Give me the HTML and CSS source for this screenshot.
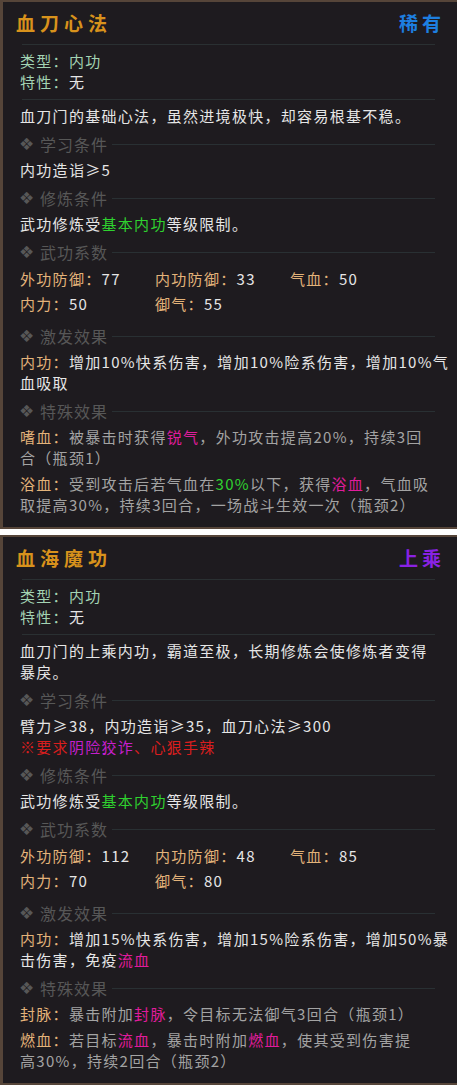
FILE: index.html
```html
<!DOCTYPE html>
<html lang="zh-CN">
<head>
<meta charset="utf-8">
<title>武功</title>
<link rel="stylesheet" href="styles.css">
</head>
<body>
<div class="panel">
  <div class="head"><span class="name">血刀心法</span><span class="rarity rare">稀有</span></div>
  <div class="rule"></div>
  <div class="info">
    <div><span class="k">类型：内功</span></div>
    <div><span class="k">特性：</span><span class="w">无</span></div>
  </div>
  <div class="rule r2"></div>
  <p class="desc">血刀门的基础心法，虽然进境极快，却容易根基不稳。</p>

  <div class="sec"><span class="dia">❖</span><span class="st">学习条件</span><span class="ln"></span></div>
  <p class="txt">内功造诣≥5</p>

  <div class="sec"><span class="dia">❖</span><span class="st">修炼条件</span><span class="ln"></span></div>
  <p class="txt">武功修炼受<span class="g">基本内功</span>等级限制。</p>

  <div class="sec"><span class="dia">❖</span><span class="st">武功系数</span><span class="ln"></span></div>
  <div class="stats">
    <span><b>外功防御：</b>77</span><span><b>内功防御：</b>33</span><span><b>气血：</b>50</span>
    <span><b>内力：</b>50</span><span><b>御气：</b>55</span>
  </div>

  <div class="sec sec-far"><span class="dia">❖</span><span class="st">激发效果</span><span class="ln"></span></div>
  <p class="txt"><b class="lb">内功：</b>增加10%快系伤害，增加10%险系伤害，增加10%气<br>血吸取</p>

  <div class="sec"><span class="dia">❖</span><span class="st">特殊效果</span><span class="ln"></span></div>
  <p class="eff"><b class="lb">嗜血：</b>被暴击时获得<span class="m">锐气</span>，外功攻击提高20%，持续3回<br>合（瓶颈1）</p>
  <p class="eff"><b class="lb">浴血：</b>受到攻击后若气血在<span class="g">30%</span>以下，获得<span class="m">浴血</span>，气血吸<br>取提高30%，持续3回合，一场战斗生效一次（瓶颈2）</p>
</div>

<div class="panel">
  <div class="head"><span class="name">血海魔功</span><span class="rarity epic">上乘</span></div>
  <div class="rule"></div>
  <div class="info">
    <div><span class="k">类型：内功</span></div>
    <div><span class="k">特性：</span><span class="w">无</span></div>
  </div>
  <div class="rule r2"></div>
  <p class="desc">血刀门的上乘内功，霸道至极，长期修炼会使修炼者变得<br>暴戾。</p>

  <div class="sec"><span class="dia">❖</span><span class="st">学习条件</span><span class="ln"></span></div>
  <p class="txt">臂力≥38，内功造诣≥35，血刀心法≥300<br><span class="red">※要求<span class="pu">阴险狡诈</span>、心狠手辣</span></p>

  <div class="sec"><span class="dia">❖</span><span class="st">修炼条件</span><span class="ln"></span></div>
  <p class="txt">武功修炼受<span class="g">基本内功</span>等级限制。</p>

  <div class="sec"><span class="dia">❖</span><span class="st">武功系数</span><span class="ln"></span></div>
  <div class="stats">
    <span><b>外功防御：</b>112</span><span><b>内功防御：</b>48</span><span><b>气血：</b>85</span>
    <span><b>内力：</b>70</span><span><b>御气：</b>80</span>
  </div>

  <div class="sec sec-far"><span class="dia">❖</span><span class="st">激发效果</span><span class="ln"></span></div>
  <p class="txt"><b class="lb">内功：</b>增加15%快系伤害，增加15%险系伤害，增加50%暴<br>击伤害，免疫<span class="m">流血</span></p>

  <div class="sec"><span class="dia">❖</span><span class="st">特殊效果</span><span class="ln"></span></div>
  <p class="eff"><b class="lb">封脉：</b>暴击附加<span class="m">封脉</span>，令目标无法御气3回合（瓶颈1）</p>
  <p class="eff"><b class="lb">燃血：</b>若目标<span class="m">流血</span>，暴击时附加<span class="m">燃血</span>，使其受到伤害提<br>高30%，持续2回合（瓶颈2）</p>
</div>
</body>
</html>
```

FILE: styles.css
```css
html, body {
  margin: 0;
  padding: 0;
  background: #ffffff;
}

body {
  width: 457px;
  height: 1085px;
  overflow: hidden;
  font-family: "Noto Sans CJK SC", "Noto Sans", sans-serif;
  font-size: 15px;
  letter-spacing: 1.3px;
  line-height: 21px;
  color: #e6e6e6;
  display: flex;
  flex-direction: column;
  gap: 6px;
}

.panel {
  background: #1e1b1f;
  border-left: 3px solid #564539;
  border-top: 2px solid #564539;
  border-bottom: 2px solid #564539;
  padding: 0 6px 12px 17px;
  flex: none;
}

.head {
  height: 42px;
  display: flex;
  align-items: center;
  justify-content: space-between;
  margin: 0 10px 0 -4px;
}

.name,
.rarity {
  font-size: 19px;
  font-weight: 700;
  letter-spacing: 5px;
  line-height: 42px;
}

.name { color: #d8921c; }
.rarity { letter-spacing: 4px; margin-right: -4px; }
.rare { color: #1d7fe0; }
.epic { color: #8a22e4; }

.rule {
  height: 1px;
  background: #2a3032;
  margin: 0 16px 0 2px;
}

.rule.r2 { margin-top: 7px; }

.info { margin-top: 5px; }
.k { color: #a3d3b3; }
.w { color: #e6e6e6; }

p { margin: 0; }

.desc { margin-top: 5px; }

.sec {
  margin-top: 8px;
  height: 21px;
  display: flex;
  align-items: center;
  color: #575757;
  font-size: 16px;
  letter-spacing: 1px;
}

.sec-far { margin-top: 12px; }

.dia {
  font-family: "DejaVu Sans", sans-serif;
  font-size: 17px;
  width: 20px;
  letter-spacing: 0;
  margin-left: -1px;
  margin-right: 1px;
}

.st { white-space: nowrap; }

.ln {
  flex: 1;
  height: 1px;
  background: #293033;
  margin: 0 16px 0 4px;
}

.txt,
.eff { margin-top: 4px; }
.eff + .eff { margin-top: 5px; }
.eff { color: #a3a3a3; }

.stats {
  margin-top: 5px;
  display: grid;
  grid-template-columns: 135px 135px 1fr;
  row-gap: 4px;
}

b { font-weight: 400; }
.stats b,
.lb { color: #e3b37a; }

.g { color: #2fd22f; }
.m { color: #e01c9c; }
.red { color: #d81e1e; }
.pu { color: #c51fcc; }
```
